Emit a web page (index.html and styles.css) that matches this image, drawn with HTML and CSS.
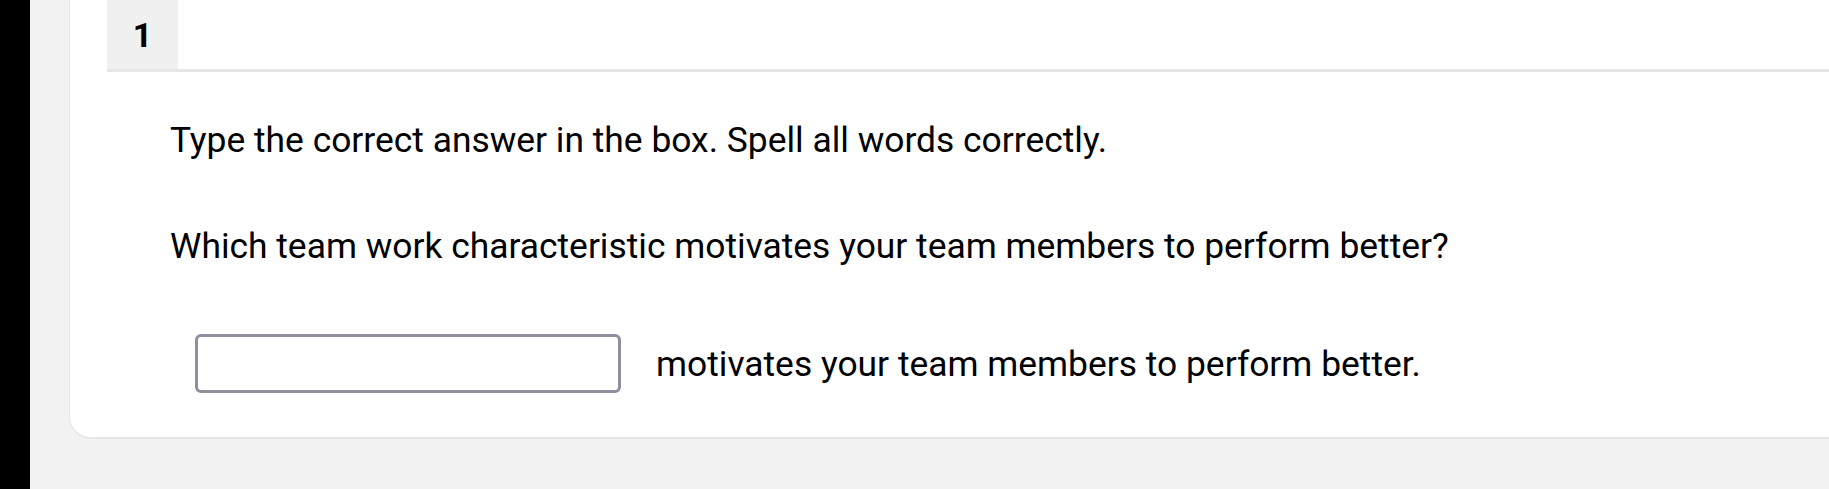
FILE: index.html
```html
<!DOCTYPE html>
<html lang="en">
<head>
    <meta charset="UTF-8">
    <meta name="viewport" content="width=device-width, initial-scale=1.0">
    <title>Question 1</title>
    <link rel="stylesheet" href="styles.css">
</head>
<body>
    <div class="page">
        <div class="edge"></div>
        <div class="main">
            <div class="card">
                <div class="card-head">
                    <div class="number">1</div>
                </div>
                <div class="card-body">
                    <p class="instructions">Type the correct answer in the box. Spell all words correctly.</p>
                    <p class="question">Which team work characteristic motivates your team members to perform better?</p>
                    <div class="answer-row">
                        <input type="text" class="answer" aria-label="Answer">
                        <span class="answer-text">motivates your team members to perform better.</span>
                    </div>
                </div>
            </div>
        </div>
    </div>
</body>
</html>
```

FILE: styles.css
```css
body {
    margin: 0;
    padding: 0;
    font-family: 'Roboto', 'Liberation Sans', sans-serif;
    background: #f2f2f2;
    color: #000;
    overflow: hidden;
}

.page {
    display: flex;
    height: 489px;
}

.edge {
    width: 30px;
    flex-shrink: 0;
    background: #000;
}

.main {
    flex: 1;
    padding-left: 39px;
}

.card {
    background: #fff;
    border-left: 1px solid #e6e6e6;
    border-bottom: 2px solid #e6e6e6;
    border-bottom-left-radius: 22px;
}

.card-head {
    display: flex;
    margin-left: 37px;
    border-bottom: 3px solid #e6e6e6;
}

.number {
    width: 71px;
    height: 69px;
    background: #f0f0f0;
    font-size: 34px;
    font-weight: bold;
    display: flex;
    align-items: center;
    justify-content: center;
}

.card-body {
    padding: 47px 0 44px 100px;
}

.card-body p {
    margin: 0;
    font-size: 35.4px;
    line-height: 42px;
}

.instructions {
    margin-bottom: 64px !important;
}

.question {
    margin-bottom: 67px !important;
}

.answer-row {
    display: flex;
    align-items: center;
    gap: 35px;
    padding-left: 25px;
}

.answer {
    width: 426px;
    height: 59px;
    box-sizing: border-box;
    border: 3px solid #8f8d9e;
    border-radius: 6px;
    margin: 0;
    font-size: 30px;
    font-family: inherit;
}

.answer-text {
    font-size: 35.4px;
    line-height: 42px;
}
```
